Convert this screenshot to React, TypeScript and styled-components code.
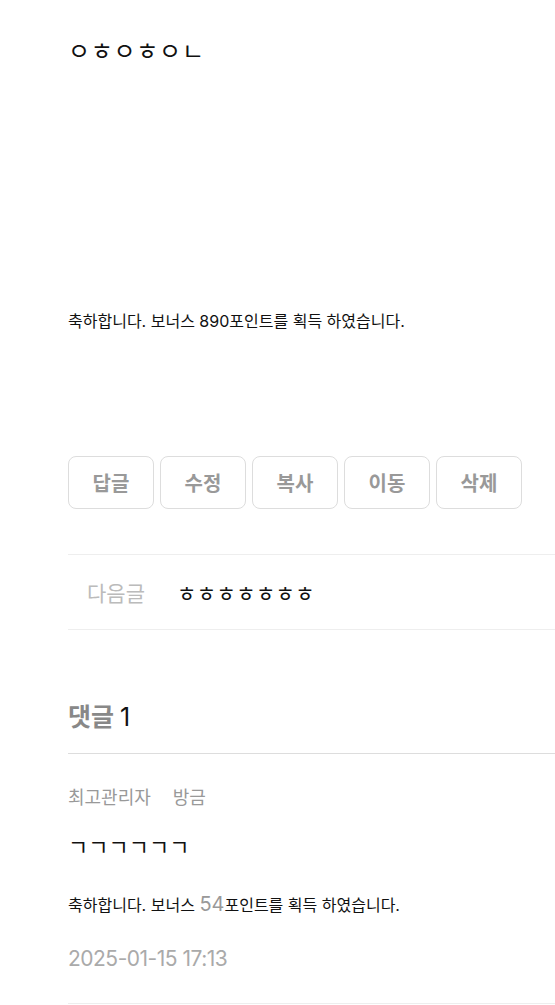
import styled, { createGlobalStyle } from "styled-components";

const GlobalStyle = createGlobalStyle`
  html, body {
    margin: 0;
    padding: 0;
    background: #fff;
    overflow: hidden;
  }
  body {
    font-family: Inter, "Noto Sans CJK KR", sans-serif;
    color: #111;
  }
`;

const Page = styled.div`
  padding: 36px 0 0 68px;
  width: 487px;
`;

const Title = styled.h1`
  margin: 0;
  font-size: 24px;
  font-weight: 400;
  line-height: 32px;
  letter-spacing: 0.7px;
`;

const Body = styled.p`
  margin: 240px 0 0;
  font-size: 16px;
  line-height: 26px;
`;

const Actions = styled.div`
  display: flex;
  gap: 6px;
  margin-top: 122px;
`;

const ActionButton = styled.button`
  width: 86px;
  height: 53px;
  border: 1px solid #ddd;
  border-radius: 8px;
  background: #fff;
  font-family: inherit;
  font-size: 20px;
  font-weight: 700;
  color: #999;
  cursor: pointer;
`;

const NavRow = styled.div`
  display: flex;
  align-items: center;
  height: 74px;
  margin-top: 45px;
  border-top: 1px solid #eee;
  border-bottom: 1px solid #eee;
  padding-left: 19px;
`;

const NavLabel = styled.span`
  width: 90px;
  font-size: 21px;
  color: #bbb;
`;

const NavLink = styled.a`
  font-size: 21px;
  color: #111;
  letter-spacing: 0.4px;
`;

const CommentHead = styled.h2`
  margin: 70px 0 0;
  padding-bottom: 19px;
  border-bottom: 1px solid #ddd;
  font-size: 25px;
  font-weight: 700;
  color: #888;
  line-height: 34px;
`;

const Count = styled.span`
  font-weight: 400;
  color: #111;
`;

const Comment = styled.div`
  padding-top: 31px;
  padding-bottom: 30px;
  border-bottom: 1px solid #eee;
`;

const Meta = styled.div`
  display: flex;
  gap: 22px;
  font-size: 18px;
  color: #999;
  line-height: 26px;
`;

const CommentText = styled.div`
  margin-top: 22px;
  font-size: 22px;
  line-height: 28px;
`;

const Notice = styled.p`
  margin: 30px 0 0;
  font-size: 16px;
  line-height: 26px;
`;

const Point = styled.span`
  font-size: 20px;
  color: #999;
`;

const Date = styled.div`
  margin-top: 27px;
  font-size: 21px;
  color: #aaa;
  line-height: 28px;
  letter-spacing: -0.5px;
`;

export default function App() {
  const actions = ["답글", "수정", "복사", "이동", "삭제"];
  return (
    <>
      <GlobalStyle />
      <Page>
        <Title>ㅇㅎㅇㅎㅇㄴ</Title>
        <Body>축하합니다. 보너스 890포인트를 획득 하였습니다.</Body>
        <Actions>
          {actions.map(a => <ActionButton key={a}>{a}</ActionButton>)}
        </Actions>
        <NavRow>
          <NavLabel>다음글</NavLabel>
          <NavLink>ㅎㅎㅎㅎㅎㅎㅎ</NavLink>
        </NavRow>
        <CommentHead>
          댓글 <Count>1</Count>
        </CommentHead>
        <Comment>
          <Meta>
            <span>최고관리자</span>
            <span>방금</span>
          </Meta>
          <CommentText>ㄱㄱㄱㄱㄱㄱ</CommentText>
          <Notice>
            축하합니다. 보너스 <Point>54</Point>포인트를 획득 하였습니다.
          </Notice>
          <Date>2025-01-15 17:13</Date>
        </Comment>
      </Page>
    </>
  );
}
